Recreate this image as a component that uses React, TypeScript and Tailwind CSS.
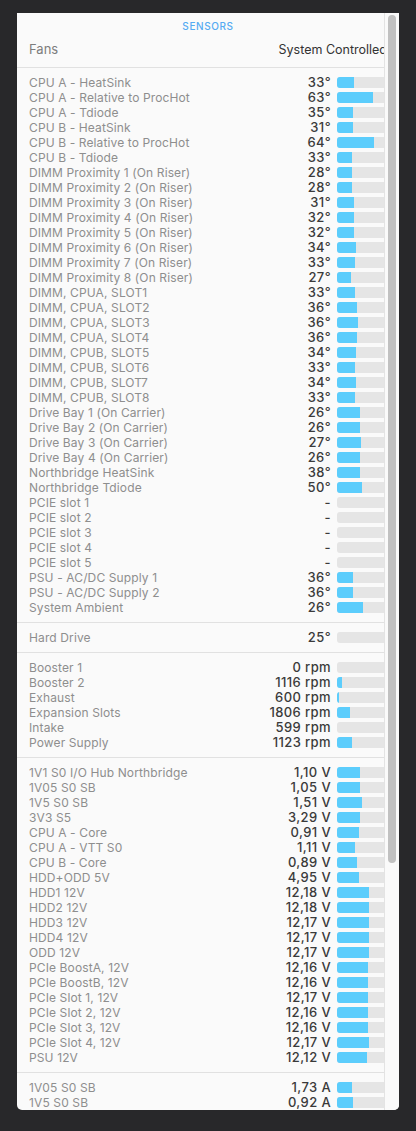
import React from "react";

type Row = [string, string, number];

const temps: Row[] = [
  ["CPU A - HeatSink", "33°", 17],
  ["CPU A - Relative to ProcHot", "63°", 36],
  ["CPU A - Tdiode", "35°", 16],
  ["CPU B - HeatSink", "31°", 16],
  ["CPU B - Relative to ProcHot", "64°", 37],
  ["CPU B - Tdiode", "33°", 15],
  ["DIMM Proximity 1 (On Riser)", "28°", 15],
  ["DIMM Proximity 2 (On Riser)", "28°", 15],
  ["DIMM Proximity 3 (On Riser)", "31°", 17],
  ["DIMM Proximity 4 (On Riser)", "32°", 17],
  ["DIMM Proximity 5 (On Riser)", "32°", 17],
  ["DIMM Proximity 6 (On Riser)", "34°", 19],
  ["DIMM Proximity 7 (On Riser)", "33°", 18],
  ["DIMM Proximity 8 (On Riser)", "27°", 14],
  ["DIMM, CPUA, SLOT1", "33°", 18],
  ["DIMM, CPUA, SLOT2", "36°", 20],
  ["DIMM, CPUA, SLOT3", "36°", 21],
  ["DIMM, CPUA, SLOT4", "36°", 20],
  ["DIMM, CPUB, SLOT5", "34°", 19],
  ["DIMM, CPUB, SLOT6", "33°", 18],
  ["DIMM, CPUB, SLOT7", "34°", 19],
  ["DIMM, CPUB, SLOT8", "33°", 18],
  ["Drive Bay 1 (On Carrier)", "26°", 23],
  ["Drive Bay 2 (On Carrier)", "26°", 23],
  ["Drive Bay 3 (On Carrier)", "27°", 24],
  ["Drive Bay 4 (On Carrier)", "26°", 23],
  ["Northbridge HeatSink", "38°", 23],
  ["Northbridge Tdiode", "50°", 25],
  ["PCIE slot 1", "-", 0],
  ["PCIE slot 2", "-", 0],
  ["PCIE slot 3", "-", 0],
  ["PCIE slot 4", "-", 0],
  ["PCIE slot 5", "-", 0],
  ["PSU - AC/DC Supply 1", "36°", 16],
  ["PSU - AC/DC Supply 2", "36°", 16],
  ["System Ambient", "26°", 26],
];

const drives: Row[] = [["Hard Drive", "25°", 0]];

const fans: Row[] = [
  ["Booster 1", "0 rpm", 0],
  ["Booster 2", "1116 rpm", 5],
  ["Exhaust", "600 rpm", 2],
  ["Expansion Slots", "1806 rpm", 13],
  ["Intake", "599 rpm", 0],
  ["Power Supply", "1123 rpm", 15],
];

const volts: Row[] = [
  ["1V1 S0 I/O Hub Northbridge", "1,10 V", 23],
  ["1V05 S0 SB", "1,05 V", 23],
  ["1V5 S0 SB", "1,51 V", 25],
  ["3V3 S5", "3,29 V", 23],
  ["CPU A - Core", "0,91 V", 22],
  ["CPU A - VTT S0", "1,11 V", 18],
  ["CPU B - Core", "0,89 V", 20],
  ["HDD+ODD 5V", "4,95 V", 22],
  ["HDD1 12V", "12,18 V", 32],
  ["HDD2 12V", "12,18 V", 32],
  ["HDD3 12V", "12,17 V", 32],
  ["HDD4 12V", "12,17 V", 32],
  ["ODD 12V", "12,17 V", 32],
  ["PCIe BoostA, 12V", "12,16 V", 31],
  ["PCIe BoostB, 12V", "12,16 V", 31],
  ["PCIe Slot 1, 12V", "12,17 V", 31],
  ["PCIe Slot 2, 12V", "12,16 V", 31],
  ["PCIe Slot 3, 12V", "12,16 V", 31],
  ["PCIe Slot 4, 12V", "12,17 V", 32],
  ["PSU 12V", "12,12 V", 30],
];

const amps: Row[] = [
  ["1V05 S0 SB", "1,73 A", 15],
  ["1V5 S0 SB", "0,92 A", 16],
];

function SensorRow({ row }: { row: Row }) {
  const [label, value, fill] = row;
  return (
    <div className="flex h-[15px] items-center pl-[12px] pr-[12px]">
      <div className="flex-1 truncate text-[12px] leading-[15px] tracking-[0.01em] text-[#8e8e8e]">{label}</div>
      <div className="text-right text-[13px] leading-[15px] font-medium tracking-[0.03em] text-[#3a3a3a]">{value}</div>
      <div className="ml-[6px] h-[11px] w-[50px] shrink-0 overflow-hidden rounded-[3px] bg-[#e5e5e5]">
        <div className="h-full bg-[#5ccdfc]" style={{ width: `${fill}px` }} />
      </div>
    </div>
  );
}

function Section({ rows }: { rows: Row[] }) {
  return (
    <div className="border-t border-[#e1e1e1] py-[7px]">
      {rows.map((r, i) => (
        <SensorRow key={i} row={r} />
      ))}
    </div>
  );
}

export default function App() {
  return (
    <div
      className="h-[1131px] w-[416px] bg-[#28282a] pt-[13px] pl-[17px]"
      style={{ fontFamily: "Inter, 'Liberation Sans', sans-serif" }}
    >
      <div className="relative h-[1097px] w-[382px] overflow-hidden rounded-b-[5px] bg-[#fafafa]">
        <div className="pt-[7px] pb-[9px] px-[12px]">
          <div className="text-center text-[10px] leading-[12px] font-medium tracking-[0.06em] text-[#55aaf2]">
            SENSORS
          </div>
          <div className="mt-[10px] flex h-[16px] items-center justify-between whitespace-nowrap">
            <span className="text-[13px] text-[#7d7d7d]">Fans</span>
            <span className="text-[12.5px] text-[#333333]">System Controlled</span>
          </div>
        </div>
        <Section rows={temps} />
        <Section rows={drives} />
        <Section rows={fans} />
        <Section rows={volts} />
        <Section rows={amps} />
        <div className="absolute top-0 right-0 h-full w-[15px] border-l border-[#e3e3e3] bg-[#fafafa] pt-[2px] pl-[3px]">
          <div className="h-[848px] w-[8px] rounded-full bg-[#c1c1c1]" />
        </div>
      </div>
    </div>
  );
}
